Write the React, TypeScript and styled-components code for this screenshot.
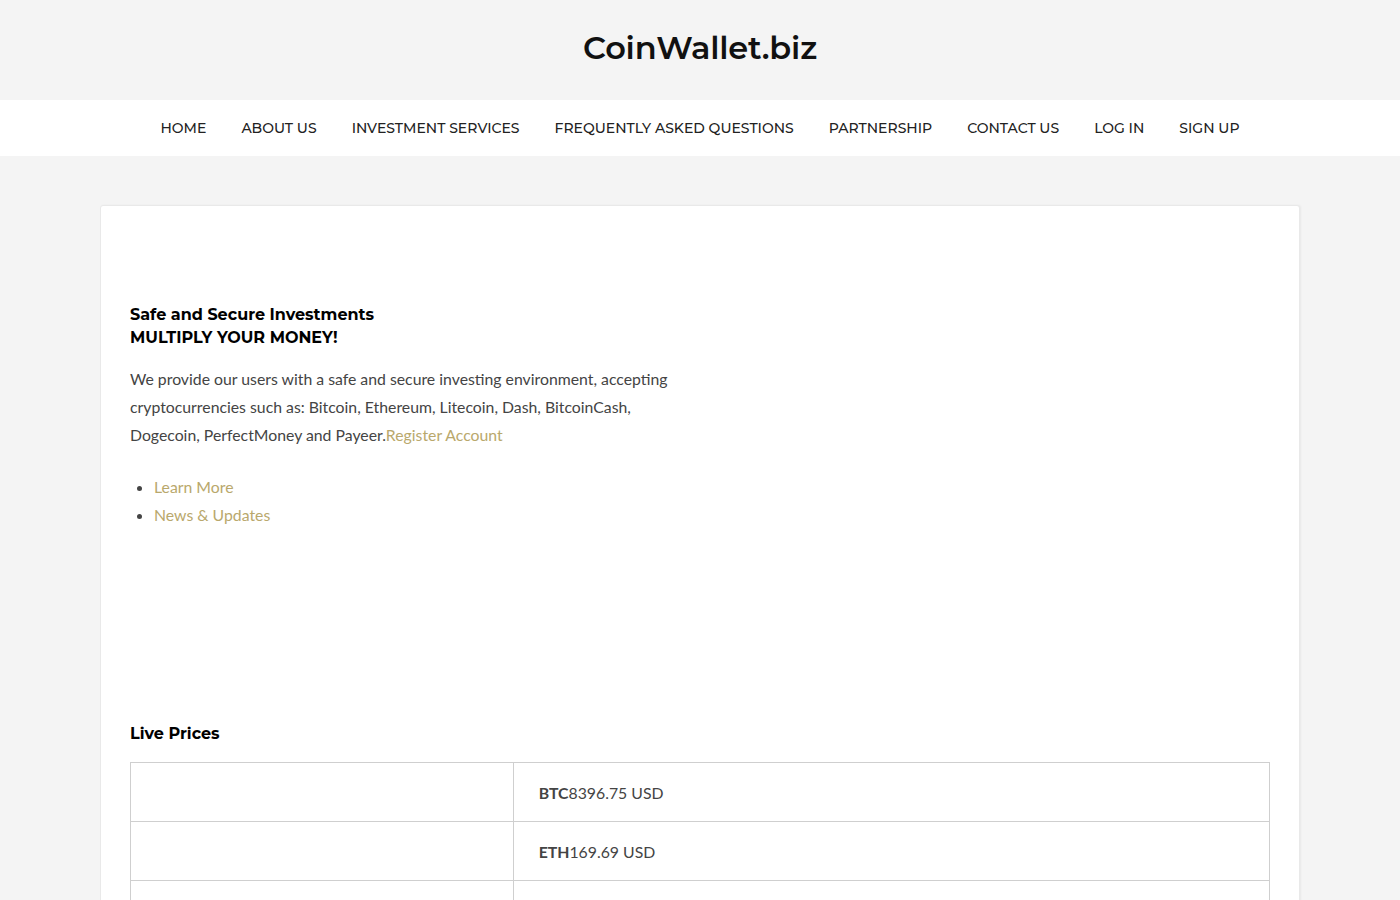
import styled, { createGlobalStyle } from 'styled-components';

const GlobalStyle = createGlobalStyle`
  html, body {
    margin: 0;
    padding: 0;
    background: #f4f4f4;
  }
  body {
    font-family: Lato, "Open Sans", sans-serif;
    color: #444;
  }
`;

const headingFont = `Montserrat, "DejaVu Sans", "Noto Sans", sans-serif`;

const navItems = [
  'Home',
  'About Us',
  'Investment Services',
  'Frequently Asked Questions',
  'Partnership',
  'Contact Us',
  'Log In',
  'Sign Up',
];

const prices = [
  { code: 'BTC', value: '8396.75' },
  { code: 'ETH', value: '169.69' },
  { code: 'LTC', value: '56.31' },
  { code: 'DASH', value: '72.14' },
];

const App = () => {
  return (
    <>
      <GlobalStyle />
      <Masthead>
        <Logo>CoinWallet.biz</Logo>
      </Masthead>
      <NavBar>
        {navItems.map((item) => (
          <NavLink key={item} href="#">
            {item}
          </NavLink>
        ))}
      </NavBar>
      <Main>
        <Card>
          <Intro>
            <Heading>
              Safe and Secure Investments
              <br />
              MULTIPLY YOUR MONEY!
            </Heading>
            <Text>
              We provide our users with a safe and secure investing environment, accepting
              cryptocurrencies such as: Bitcoin, Ethereum, Litecoin, Dash, BitcoinCash,
              Dogecoin, PerfectMoney and Payeer.<Link href="#">Register Account</Link>
            </Text>
            <LinkList>
              <li>
                <Link href="#">Learn More</Link>
              </li>
              <li>
                <Link href="#">News &amp; Updates</Link>
              </li>
            </LinkList>
          </Intro>
          <SectionTitle>Live Prices</SectionTitle>
          <PriceTable>
            <tbody>
              {prices.map((p) => (
                <tr key={p.code}>
                  <IconCell />
                  <PriceCell>
                    <strong>{p.code}</strong>
                    {p.value} USD
                  </PriceCell>
                </tr>
              ))}
            </tbody>
          </PriceTable>
        </Card>
      </Main>
    </>
  );
};

const Masthead = styled.header`
  height: 100px;
  box-sizing: border-box;
  padding-bottom: 6px;
  display: flex;
  align-items: center;
  justify-content: center;
  background: #f4f4f4;
`;

const Logo = styled.h1`
  margin: 0;
  font-family: ${headingFont};
  font-size: 32px;
  font-weight: 600;
  color: #111;
  letter-spacing: -0.2px;
`;

const NavBar = styled.nav`
  height: 56px;
  background: #fff;
  display: flex;
  align-items: center;
  justify-content: center;
  gap: 35px;
`;

const NavLink = styled.a`
  font-family: ${headingFont};
  font-size: 14px;
  font-weight: 500;
  text-transform: uppercase;
  color: #222;
  text-decoration: none;
`;

const Main = styled.main`
  padding: 49px 100px 0;
`;

const Card = styled.section`
  background: #fff;
  border: 1px solid #e9e9e9;
  border-radius: 3px;
  box-shadow: 1px 0 2px rgba(0, 0, 0, 0.05);
  padding: 97px 29px 40px;
  min-height: 800px;
`;

const Intro = styled.div`
  max-width: 555px;
  margin-bottom: 193px;
`;

const Heading = styled.h2`
  margin: 0 0 16px;
  font-family: ${headingFont};
  font-size: 16px;
  line-height: 23px;
  font-weight: 700;
  color: #000;
`;

const Text = styled.p`
  margin: 0 0 24px;
  font-size: 15.8px;
  line-height: 28px;
  color: #444;
`;

const Link = styled.a`
  color: #b9a86c;
  text-decoration: none;
`;

const LinkList = styled.ul`
  margin: 0;
  padding-left: 24px;
  font-size: 15.8px;
  line-height: 28px;

  li::marker {
    color: #444;
  }
`;

const SectionTitle = styled.h3`
  margin: 0 0 16px;
  font-family: ${headingFont};
  font-size: 16px;
  line-height: 24px;
  font-weight: 700;
  color: #000;
`;

const PriceTable = styled.table`
  width: 100%;
  border-collapse: collapse;
  border: 1px solid #cfcfcf;
`;

const IconCell = styled.td`
  width: 33.6%;
  height: 58px;
  border: 1px solid #cfcfcf;
  padding: 0;
`;

const PriceCell = styled.td`
  border: 1px solid #cfcfcf;
  padding: 0 25px;
  font-size: 15.8px;
  color: #444;

  strong {
    font-weight: 700;
  }
`;

export default App;
